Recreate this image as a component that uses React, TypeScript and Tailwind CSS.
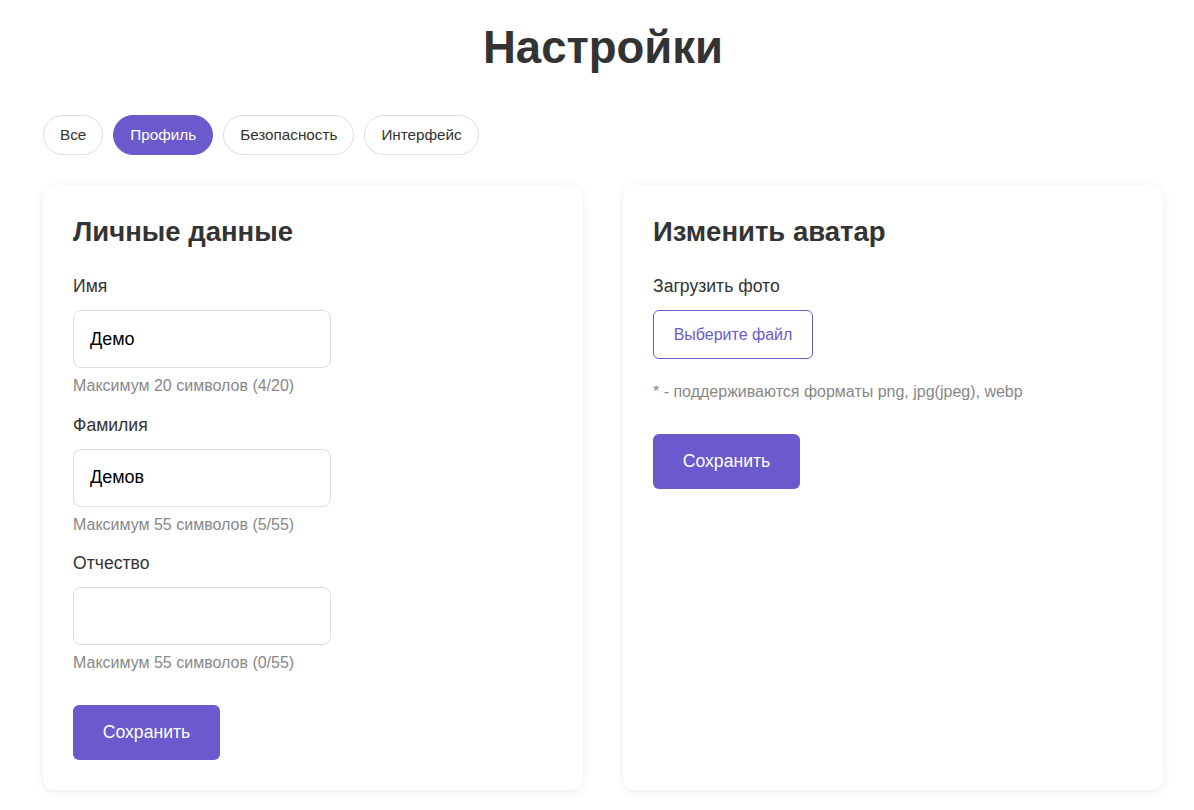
import { useState } from "react";

const tabs = ["Все", "Профиль", "Безопасность", "Интерфейс"];

interface FieldProps {
  label: string;
  value: string;
  max: number;
  onChange: (v: string) => void;
}

const Field = ({ label, value, max, onChange }: FieldProps) => (
  <div className="mb-[16.5px]">
    <label className="block text-[17.6px] leading-[24px] text-[#333] mb-3">{label}</label>
    <input
      value={value}
      maxLength={max}
      onChange={(e) => onChange(e.target.value)}
      className="block w-[258px] h-[58px] px-4 rounded-lg border border-[#ddd] text-[18px] text-black outline-none bg-white"
    />
    <p className="mt-[8px] text-[16px] leading-[20px] text-[#888]">
      Максимум {max} символов ({value.length}/{max})
    </p>
  </div>
);

export default function App() {
  const [active, setActive] = useState("Профиль");
  const [name, setName] = useState("Демо");
  const [surname, setSurname] = useState("Демов");
  const [patronymic, setPatronymic] = useState("");

  return (
    <div className="min-h-screen bg-white font-['Liberation_Sans',Arial,sans-serif] text-[#333]">
      <div className="w-[1120px] ml-[43px] pt-[22px] pb-4">
        <h1 className="text-center text-[45.5px] leading-[52px] font-bold text-[#333]">Настройки</h1>

        {/* Tabs */}
        <div className="flex gap-[10px] mt-[41px]">
          {tabs.map((t) => (
            <button
              key={t}
              onClick={() => setActive(t)}
              className={
                t === active
                  ? "h-10 px-4 rounded-full border border-[#6a5acd] bg-[#6a5acd] text-white text-[15.25px]"
                  : "h-10 px-4 rounded-full border border-[#ddd] bg-white text-[#333] text-[15.25px]"
              }
            >
              {t}
            </button>
          ))}
        </div>

        <div className="grid grid-cols-2 gap-10 mt-[30px]">
          {/* Personal data */}
          <div className="bg-white rounded-xl p-[30px] shadow-[0_2px_10px_rgba(0,0,0,0.08)]">
            <h2 className="text-[27.5px] leading-[34px] font-bold text-[#333] mb-[25px]">Личные данные</h2>
            <Field label="Имя" value={name} max={20} onChange={setName} />
            <Field label="Фамилия" value={surname} max={55} onChange={setSurname} />
            <Field label="Отчество" value={patronymic} max={55} onChange={setPatronymic} />
            <button className="mt-[15.5px] w-[147px] h-[55px] rounded-md bg-[#6a5acd] text-white text-[17.6px]">
              Сохранить
            </button>
          </div>

          {/* Avatar */}
          <div className="bg-white rounded-xl p-[30px] shadow-[0_2px_10px_rgba(0,0,0,0.08)]">
            <h2 className="text-[27.5px] leading-[34px] font-bold text-[#333] mb-[25px]">Изменить аватар</h2>
            <label className="block text-[17.6px] leading-[24px] text-[#333] mb-3">Загрузить фото</label>
            <button className="w-[160px] h-[49px] rounded-md border border-[#6a5acd] bg-white text-[#6a5acd] text-[16px]">
              Выберите файл
            </button>
            <p className="mt-[23px] text-[16px] leading-[20px] text-[#888]">
              * - поддерживаются форматы png, jpg(jpeg), webp
            </p>
            <button className="mt-8 w-[147px] h-[55px] rounded-md bg-[#6a5acd] text-white text-[17.6px]">
              Сохранить
            </button>
          </div>
        </div>
      </div>
    </div>
  );
}
